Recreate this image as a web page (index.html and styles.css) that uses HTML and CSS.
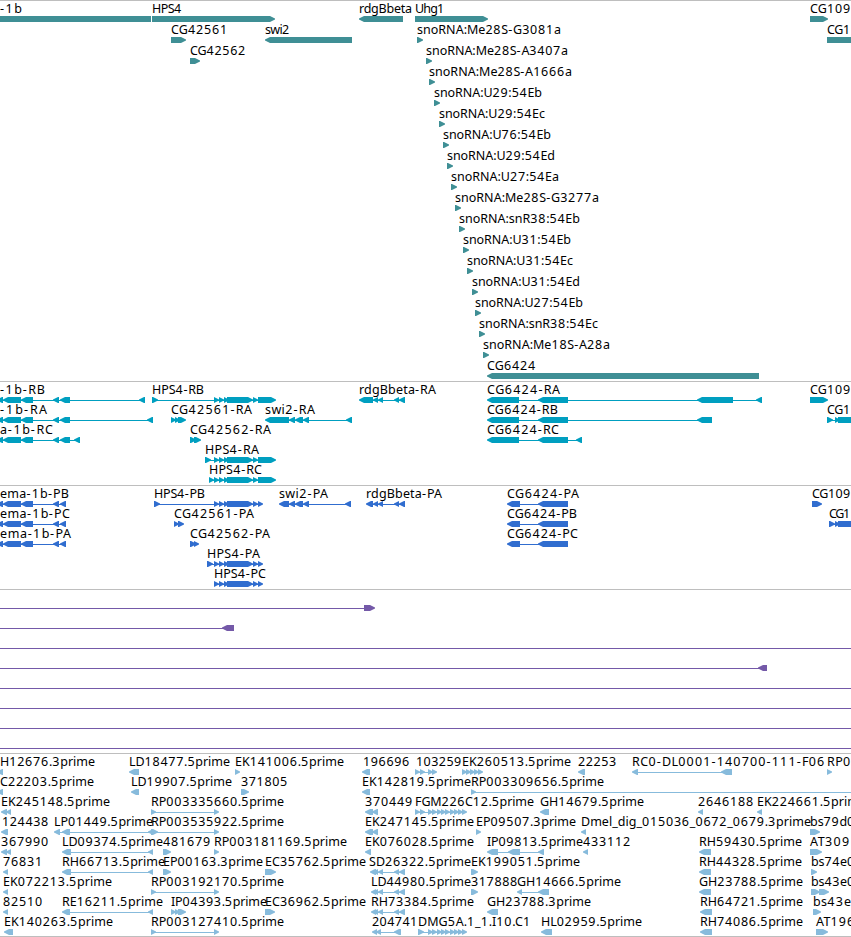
FILE: index.html
```
<!DOCTYPE html>
<html lang="en">
<head>
    <meta charset="UTF-8">
    <title>Genome tracks</title>
    <link rel="stylesheet" href="styles.css">
</head>
<body>
    <div class="track genes" id="genes"></div>
    <div class="track transcripts" id="transcripts"></div>
    <div class="track proteins" id="proteins"></div>
    <div class="track insertions" id="insertions"></div>
    <div class="track ests" id="ests"></div>
    <script src="tracks.js"></script>
</body>
</html>
```
FILE: styles.css
```
body {
    margin: 0;
    background-color: #fff;
    overflow: hidden;
}

.track {
    border-top: 1px solid #bebebe;
    padding-bottom: 3px;
}

/* arrows hang 1px below their row */
.row {
    display: block;
    width: 100%;
    height: 20px;
    overflow: visible;
    fill: currentColor;
}

.row text {
    fill: #000;
    font-family: "Noto Sans", sans-serif;
    font-size: 12.5px;
    white-space: pre;
}

.digits {
    letter-spacing: 0.8px;
}

.genes {
    color: #3f8f95;
    padding-bottom: 2px;
}

.genes .row {
    height: 21px;
}

.transcripts {
    color: #009fc0;
}

.proteins {
    color: #306dcf;
}

.insertions {
    color: #7459a8;
}

.ests {
    color: #87bbdc;
    padding-bottom: 2px;
    border-bottom: 1px solid #bebebe;
}
```
FILE: tracks.js
```
const SVG = "http://www.w3.org/2000/svg";

// exons shared by several features
const sema = "-3-3 3-21 21-33 53-59 60-70";
const semaP = "-3-3 3-21 21-33 53-59 60-66";
const hps4 = "214-219 219-224 224-229 227-253 253-258 258-276";
const hps4P = "214-219 219-224 224-229 227-253 253-258 258-263";
const rdg = "373-378 378-383 394-399 399-405";
const ladder = "428-433 432-437 437-442 441-446 445-450 450-455 454-459 458-463 462-467";

// each feature: label, label start, label end, strand, exons
const tracks = {
    genes: [
        [["-1b", 0, 22, "<", "-10-151"], ["HPS4", 152, 182, ">", "152-275"], ["rdgBbeta", 359, 412, "<", "359-403"], ["Uhg1", 415, 445, ">", "415-488"], ["CG109", 810, 851, ">", "810-828"]],
        [["CG42561", 171, 228, ">", "171-186"], ["swi2", 265, 290, "<", "265-352"], ["snoRNA:Me28S-G3081a", 417, 561, ">", "417-423"], ["CG1", 827, 851, ">", "827-900"]],
        [["CG42562", 190, 246, ">", "190-200"], ["snoRNA:Me28S-A3407a", 426, 568, ">", "426-432"]],
        [["snoRNA:Me28S-A1666a", 429, 572, ">", "429-435"]],
        [["snoRNA:U29:54Eb", 434, 542, ">", "434-440"]],
        [["snoRNA:U29:54Ec", 439, 545, ">", "439-445"]],
        [["snoRNA:U76:54Eb", 443, 551, ">", "443-449"]],
        [["snoRNA:U29:54Ed", 447, 555, ">", "447-453"]],
        [["snoRNA:U27:54Ea", 451, 559, ">", "451-457"]],
        [["snoRNA:Me28S-G3277a", 455, 599, ">", "455-461"]],
        [["snoRNA:snR38:54Eb", 459, 580, ">", "459-465"]],
        [["snoRNA:U31:54Eb", 463, 571, ">", "463-469"]],
        [["snoRNA:U31:54Ec", 467, 573, ">", "467-473"]],
        [["snoRNA:U31:54Ed", 472, 580, ">", "472-478"]],
        [["snoRNA:U27:54Eb", 475, 583, ">", "475-481"]],
        [["snoRNA:snR38:54Ec", 479, 598, ">", "479-485"]],
        [["snoRNA:Me18S-A28a", 483, 610, ">", "483-489"]],
        [["CG6424", 487, 536, "<", "487-759"]]
    ],
    transcripts: [
        [["-1b-RB", 0, 45, "<", sema + " 139-145"], ["HPS4-RB", 152, 204, ">", "152-158 " + hps4], ["rdgBbeta-RA", 359, 436, "<", "359-373 " + rdg], ["CG6424-RA", 487, 560, "<", "487-519 538-568 697-733 756-762"], ["CG109", 810, 851, ">", "810-828"]],
        [["-1b-RA", 0, 47, "<", sema + " 147-153"], ["CG42561-RA", 171, 252, ">", "171-176 175-180 178-186"], ["swi2-RA", 265, 315, "<", "265-289 289-295 295-303 303-309 346-352"], ["CG6424-RB", 487, 558, "<", "487-519 538-568 697-712"], ["CG1", 827, 851, ">", "827-833 835-840 838-900"]],
        [["a-1b-RC", 0, 53, "<", sema + " 74-80"], ["CG42562-RA", 190, 271, ">", "190-196 194-201"], ["CG6424-RC", 487, 559, "<", "487-519 538-568 576-582"]],
        [["HPS4-RA", 205, 259, ">", "205-211 " + hps4]],
        [["HPS4-RC", 209, 262, ">", "209-214 " + hps4]]
    ],
    proteins: [
        [["ema-1b-PB", 0, 69, "<", semaP], ["HPS4-PB", 154, 205, ">", "154-160 " + hps4P], ["swi2-PA", 279, 328, "<", "279-289 289-295 295-303 303-309 345-351"], ["rdgBbeta-PA", 366, 442, "<", "366-373 " + rdg], ["CG6424-PA", 507, 579, "<", "507-520 538-568"], ["CG109", 812, 851, ">", "812-822"]],
        [["ema-1b-PC", 0, 70, "<", semaP], ["CG42561-PA", 174, 254, ">", "174-179 178-184"], ["CG6424-PB", 507, 577, "<", "507-520 538-568"], ["CG1", 829, 851, ">", "829-835 835-840 838-900"]],
        [["ema-1b-PA", 0, 71, "<", semaP], ["CG42562-PA", 190, 270, ">", "190-196 194-199"], ["CG6424-PC", 507, 578, "<", "507-520 538-568"]],
        [["HPS4-PA", 207, 260, ">", "207-213 " + hps4P]],
        [["HPS4-PC", 214, 266, ">", hps4P]]
    ],
    insertions: [
        [["", 0, 0, ">", "-20--10 364-375"]],
        [["", 0, 0, "<", "222-234 -20--10"]],
        [["", 0, 0, "<", "-20--10 900-910"]],
        [["", 0, 0, "<", "758-767 -20--10"]],
        [["", 0, 0, "<", "-20--10 900-910"]],
        [["", 0, 0, "<", "-20--10 900-910"]],
        [["", 0, 0, "<", "-20--10 900-910"]],
        [["", 0, 0, "<", "-20--10 900-910"]]
    ],
    ests: [
        [["H12676.3prime", 0, 95, "<", "-3-3"], ["LD18477.5prime", 129, 230, "<", "129-139"], ["EK141006.5prime", 235, 344, ">", "235-240"], ["196696", 363, 410, "<", "362-370"], ["103259", 416, 462, ">", "415-420 420-425 428-433 432-437"], ["EK260513.5prime", 462, 571, ">", "462-467 466-471 470-475 474-479 478-483"], ["22253", 578, 617, "<", "578-585"], ["RC0-DL0001-140700-111-F06", 632, 825, "<", "632-638 721-732"], ["RP0", 827, 851, ">", "827-832"]],
        [["C22203.5prime", 0, 94, "<", "-3-3"], ["LD19907.5prime", 131, 232, "<", "131-139"], ["371805", 241, 288, ">", "241-249"], ["EK142819.5prime", 362, 471, "<", "362-370"], ["RP003309656.5prime", 471, 604, ">", "471-476 900-910"]],
        [["EK245148.5prime", 1, 110, "<", "1-7 6-11"], ["RP003335660.5prime", 151, 284, ">", "151-156 214-219"], ["370449", 365, 413, "<", "365-373 372-378"], ["FGM226C12.5prime", 415, 534, ">", "415-420 420-425 " + ladder], ["GH14679.5prime", 540, 644, "<", "540-549"], ["2646188", 698, 754, "<", "698-703"], ["EK224661.5prime", 757, 866, "<", "757-762"]],
        [["124438", 2, 49, "<", "1-8"], ["LP01449.5prime", 54, 153, "<", "54-60 62-70 148-153"], ["RP003535922.5prime", 151, 284, ">", "151-158 214-219"], ["EK247145.5prime", 365, 474, "<", "365-373 372-378"], ["EP09507.3prime", 476, 576, ">", "476-481"], ["Dmel_dig_015036_0672_0679.3prime", 581, 811, "<", "581-586"], ["bs79d0", 810, 855, ">", "810-820"]],
        [["367990", 1, 49, "<", "1-7 6-11"], ["LD09374.5prime", 62, 163, "<", "62-71 148-153"], ["481679", 163, 211, ">", "163-171"], ["RP003181169.5prime", 214, 347, ">", "214-219"], ["EK076028.5prime", 365, 474, "<", "365-371"], ["IP09813.5prime", 487, 583, "<", "487-498 508-520 538-544"], ["433112", 583, 631, "<", "583-588"], ["RH59430.5prime", 699, 802, "<", "699-711"], ["AT309", 810, 850, ">", "810-822"]],
        [["76831", 3, 43, "<", "3-8"], ["RH66713.5prime", 62, 165, "<", "62-71 148-153"], ["EP00163.3prime", 163, 263, ">", "163-171"], ["EC35762.5prime", 265, 366, ">", "265-276"], ["SD26322.5prime", 369, 471, "<", "370-376 " + rdg], ["EK199051.5prime", 471, 580, ">", "471-478"], ["RH44328.5prime", 699, 802, "<", "699-711"], ["bs74e0", 811, 855, ">", "811-817"]],
        [["EK072213.5prime", 3, 112, "<", "3-8"], ["RP003192170.5prime", 151, 284, ">", "151-156 214-219"], ["LD44980.5prime", 371, 471, "<", "371-376 " + rdg], ["317888", 471, 518, ">", "471-478"], ["GH14666.5prime", 517, 621, "<", "517-522 538-549"], ["GH23788.5prime", 699, 803, "<", "699-711"], ["bs43e0", 811, 855, ">", "811-820 819-829"]],
        [["82510", 3, 43, "<", "3-8"], ["RE16211.5prime", 62, 163, "<", "62-70 148-153"], ["IP04393.5prime", 171, 267, ">", "171-176 175-180 178-186"], ["EC36962.5prime", 265, 366, ">", "265-275"], ["RH73384.5prime", 371, 474, "<", "371-376 " + rdg], ["GH23788.3prime", 487, 591, "<", "487-498"], ["RH64721.5prime", 700, 803, "<", "700-712"], ["bs43e", 813, 851, ">", "813-821"]],
        [["EK140263.5prime", 4, 113, "<", "4-13"], ["RP003127410.5prime", 151, 284, ">", "151-156 214-219"], ["204741", 372, 418, "<", "372-377 376-381 394-401"], ["DMG5A.1_1.I10.C1", 418, 531, ">", "418-424 " + ladder], ["HL02959.5prime", 541, 642, "<", "541-552"], ["RH74086.5prime", 700, 803, "<", "700-712"], ["AT196", 816, 855, ">", "816-828"]]
    ]
};

function add(parent, name, attrs) {
    const el = document.createElementNS(SVG, name);
    for (const key in attrs) {
        el.setAttribute(key, attrs[key]);
    }
    parent.appendChild(el);
    return el;
}

function drawExon(svg, start, end, strand) {
    const head = Math.min(5, end - start);
    const tip = strand === ">" ? end : start;
    const neck = strand === ">" ? end - head : start + head;
    const back = strand === ">" ? start : end;
    add(svg, "polygon", { points: `${back},15 ${neck},15 ${tip},17.5 ${tip},18.5 ${neck},21 ${back},21` });
}

function drawLabel(svg, label, start, end) {
    const text = add(svg, "text", { x: start, y: 12, textLength: end - start });
    for (const part of label.match(/[\d-]+|[^\d-]+/g)) {
        add(text, "tspan", /\d|-/.test(part) ? { class: "digits" } : {}).textContent = part;
    }
}

for (const id in tracks) {
    const track = document.getElementById(id);
    for (const row of tracks[id]) {
        const svg = add(track, "svg", { class: "row" });
        for (const [label, labelStart, labelEnd, strand, ranges] of row) {
            const exons = ranges.split(" ").map(r => r.match(/^(-?\d+)-(-?\d+)$/).slice(1).map(Number));
            const start = Math.min(...exons.map(e => e[0]));
            const end = Math.max(...exons.map(e => e[1]));
            if (exons.length > 1) {
                add(svg, "rect", { x: start + 1, y: 18, width: end - start - 2, height: 1 });
            }
            exons.forEach(e => drawExon(svg, e[0], e[1], strand));
            if (label) {
                drawLabel(svg, label, labelStart, labelEnd);
            }
        }
    }
}
```
